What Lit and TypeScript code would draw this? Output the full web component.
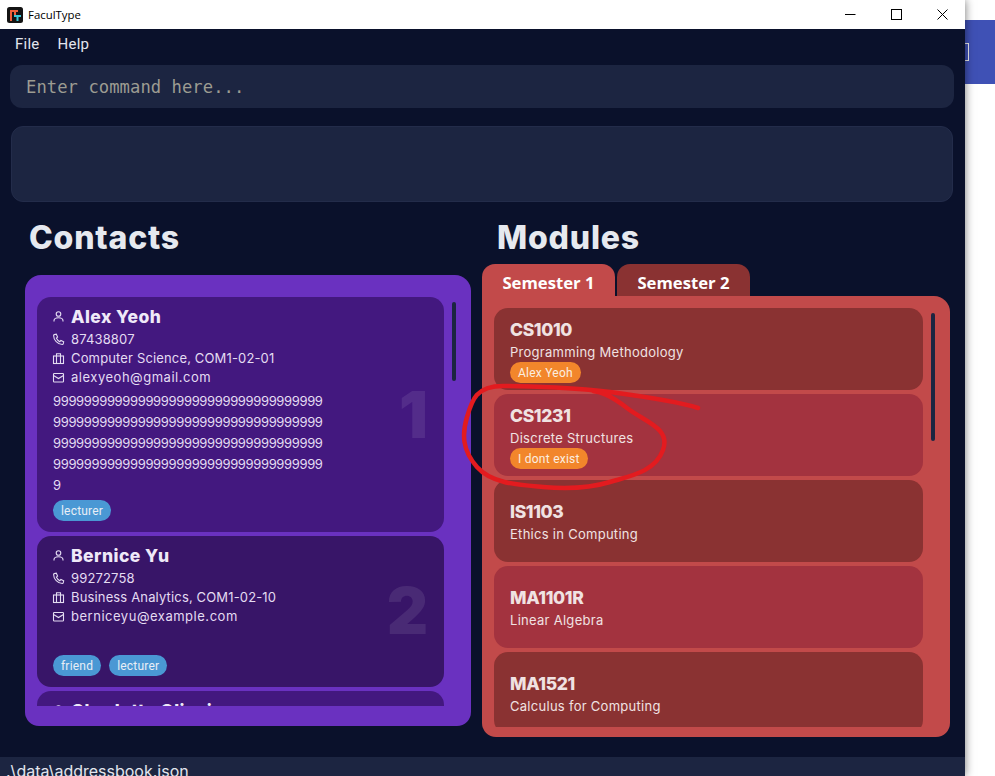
import { LitElement, html, css, svg } from "lit";
import { customElement } from "lit/decorators.js";

const NINES = "9".repeat(141);

interface Person { name: string; phone: string; dept: string; email: string; desc: string; tags: string[]; index: number; }
interface Mod { code: string; title: string; tag?: string; }

const PEOPLE: Person[] = [
  { name: "Alex Yeoh", phone: "87438807", dept: "Computer Science, COM1-02-01", email: "alexyeoh@gmail.com", desc: NINES, tags: ["lecturer"], index: 1 },
  { name: "Bernice Yu", phone: "99272758", dept: "Business Analytics, COM1-02-10", email: "berniceyu@example.com", desc: "", tags: ["friend", "lecturer"], index: 2 },
  { name: "Charlotte Oliveiro", phone: "93210283", dept: "Mathematics, COM1-02-03", email: "charlotte@example.com", desc: "", tags: ["lecturer"], index: 3 },
];

const MODS: Mod[] = [
  { code: "CS1010", title: "Programming Methodology", tag: "Alex Yeoh" },
  { code: "CS1231", title: "Discrete Structures", tag: "I dont exist" },
  { code: "IS1103", title: "Ethics in Computing" },
  { code: "MA1101R", title: "Linear Algebra" },
  { code: "MA1521", title: "Calculus for Computing" },
];

const iconPerson = svg`<circle cx="6.5" cy="4" r="2.3"/><path d="M2 11.5v-.8c0-1.8 1.6-3 4.500-3s4.500 1.200 4.500 3v.8"/>`;
const iconPhone = svg`<path d="M2.200 1.600 4.300 1.200l1.300 2.900-1.300 1c.7 1.500 1.900 2.800 3.500 3.600l1.100-1.300 2.800 1.400-.5 2.100c-.1.400-.4.600-.8.600C5.600 11.300 1.600 7 1.600 2.400c0-.4.2-.7.6-.8Z"/>`;
const iconCase = svg`<rect x="1.500" y="4" width="10" height="7.500"/><path d="M4.500 4V1.800h4V4M4.500 4v7.500M8.500 4v7.500"/>`;
const iconMail = svg`<rect x="1.500" y="2.500" width="10" height="8.500" rx=".8"/><path d="M1.500 4.500 6.500 7.500l5-3"/>`;

@customElement("app-root")
export class AppRoot extends LitElement {
  static styles = css`
    :host { display: block; width: 995px; height: 776px; overflow: hidden; position: relative; background: #fff; font-family: Inter, "Open Sans", sans-serif; }
    .screen { display: flex; height: 776px; }
    .window { width: 965px; flex: none; display: flex; flex-direction: column; background: #0a112b; position: relative; z-index: 1; box-shadow: 0 0 9px rgba(0,0,0,.55); }
    .aside { flex: 1; padding-top: 20px; }
    .blue { height: 64px; background: #3f51b5; display: flex; align-items: center; }
    .bracket { width: 3px; height: 16px; border: 1px solid #eee; border-left: none; }
    .titlebar { height: 29px; flex: none; background: #fff; display: flex; align-items: center; padding-left: 7px; box-sizing: border-box; }
    .appicon { width: 16px; height: 16px; display: block; margin-right: 5px; }
    .apptitle { font: 11.400px "Open Sans", sans-serif; color: #000; flex: 1; }
    .winbtn { width: 46px; height: 29px; display: flex; align-items: center; justify-content: center; }
    .winbtn svg { display: block; }
    .menubar { height: 30px; flex: none; display: flex; align-items: center; gap: 18px; padding-left: 15px; box-sizing: border-box; color: #e3e6ee; font: 15px Roboto, sans-serif; letter-spacing: .25px; }
    .command { height: 43px; flex: none; margin: 6px 11px 0 10px; border-radius: 12px; background: #1c2541; display: flex; align-items: center; padding-left: 16px; font: 17.200px "DejaVu Sans Mono", monospace; color: #9c9c92; letter-spacing: .05px; }
    .result { height: 76px; flex: none; margin: 18px 12px 0 11px; border-radius: 12px; background: #1c2541; box-sizing: border-box; border: 1px solid #232c4a; }
    .panes { flex: 1; min-height: 0; display: flex; }
    .col-contacts { width: 446px; margin-left: 25px; display: flex; flex-direction: column; }
    .col-modules { width: 468px; margin-left: 11px; display: flex; flex-direction: column; }
    h1 { margin: 0; font: 800 32px/1 Inter, sans-serif; color: #e6e9ef; letter-spacing: .8px; }
    .head-c { height: 73px; box-sizing: border-box; padding: 20px 0 0 4px; }
    .head-m { height: 62px; box-sizing: border-box; padding: 20px 0 0 15px; }
    .panel-c { height: 451px; background: #6a31c0; border-radius: 16px 16px 14px 14px; box-sizing: border-box; padding: 22px 0 20px 12px; position: relative; }
    .list { height: 100%; overflow: hidden; display: flex; flex-direction: column; gap: 4px; }
    .thumb { position: absolute; width: 4px; border-radius: 2px; background: #1c2541; }
    .thumb-c { left: 427px; top: 27px; height: 79px; }
    .thumb-m { left: 449px; top: 17px; height: 128px; }
    .card { width: 407px; flex: none; box-sizing: border-box; border-radius: 14px; padding: 8px 16px 11px; position: relative; color: #e4dcf2; background: #43187f; }
    .card.alt { background: #381568; }
    .name { display: flex; align-items: center; height: 23px; font: 800 17.500px/23px Inter, sans-serif; color: #efe9f8; margin-bottom: 2px; letter-spacing: .45px; }
    .row { display: flex; align-items: center; height: 19px; font: 400 13px/19px Inter, sans-serif; letter-spacing: .15px; white-space: nowrap; }
    .row.email { letter-spacing: .52px; }
    .ico { width: 13px; height: 13px; flex: none; margin: 0 6px 0 -1px; fill: none; stroke: #e4dcf2; stroke-width: 1.100; }
    .desc { margin-top: 4px; min-height: 21px; width: 272px; font: 400 13px/21px Inter, sans-serif; word-break: break-all; letter-spacing: -.36px; }
    .tags { display: flex; gap: 8px; margin-top: 4px; }
    .tag { height: 21px; box-sizing: border-box; padding: 0 8px; border-radius: 10.500px; background: #4a98d4; color: #e8eef6; font: 12px/22px Roboto, sans-serif; letter-spacing: .2px; }
    .num { position: absolute; right: 16px; font: 900 64px/1 Inter, sans-serif; color: rgba(255,255,255,.09); }
    .tabs { display: flex; gap: 2px; height: 32px; flex: none; }
    .tab { width: 133px; text-align: center; border-radius: 13px 13px 0 0; background: #8a3232; color: #fff; font: 700 16.700px/38px "Open Sans", sans-serif; }
    .tab.on { background: #c24a4a; }
    .panel-m { height: 441px; background: #c24a4a; border-radius: 0 16px 14px 14px; box-sizing: border-box; padding: 12px 0 10px 12px; position: relative; }
    .mod { width: 429px; height: 82px; flex: none; box-sizing: border-box; border-radius: 14px; padding: 2px 16px 0; background: #8a3232; color: #f0e2e2; display: flex; flex-direction: column; justify-content: center; align-items: flex-start; }
    .mod.alt { background: #a3333f; }
    .code { font: 800 17.500px/24px Inter, sans-serif; letter-spacing: -.35px; }
    .title { font: 400 13px/20px Inter, sans-serif; letter-spacing: .28px; }
    .mtag { height: 21px; flex: none; margin-bottom: -1px; box-sizing: border-box; padding: 0 8px; border-radius: 10.500px; background: #f2862b; color: #fbeee0; font: 12px/22px Roboto, sans-serif; letter-spacing: .25px; }
    .status { height: 19px; flex: none; background: #1c2541; color: #e3e6ee; padding-left: 6px; font: 16px/28px Inter, sans-serif; overflow: hidden; }
    .ink { position: absolute; left: 0; top: 0; z-index: 2; pointer-events: none; }
  `;

  private icon(c: unknown) {
    return html`<svg class="ico" viewBox="0 0 13 13">${c}</svg>`;
  }

  render() {
    return html`
      <div class="screen">
        <div class="window">
          <div class="titlebar">
            <svg class="appicon" viewBox="0 0 16 16">
              <rect width="16" height="16" rx="2.500" fill="#141414"/>
              <path d="M3 14V3h8v2H9v3H7V5H5v9Z" fill="#f0603a"/>
              <path d="M7 8h7v2h-2.500v4h-2v-4H7Z" fill="#38c8d8"/>
            </svg>
            <span class="apptitle">FaculType</span>
            <div class="winbtn"><svg width="11" height="11"><path d="M0 5.500h10.500" stroke="#000"/></svg></div>
            <div class="winbtn"><svg width="11" height="11"><rect x=".5" y=".5" width="10" height="10" fill="none" stroke="#000"/></svg></div>
            <div class="winbtn"><svg width="11" height="11"><path d="M.5.5l10 10M10.500.5l-10 10" stroke="#000" fill="none"/></svg></div>
          </div>
          <div class="menubar"><span>File</span><span>Help</span></div>
          <div class="command">Enter command here...</div>
          <div class="result"></div>
          <div class="panes">
            <div class="col-contacts">
              <div class="head-c"><h1>Contacts</h1></div>
              <div class="panel-c">
                <div class="list">
                  ${PEOPLE.map((p, i) => html`
                    <div class="card ${i % 2 ? "alt" : ""}">
                      <div class="name">${this.icon(iconPerson)}${p.name}</div>
                      <div class="row">${this.icon(iconPhone)}${p.phone}</div>
                      <div class="row">${this.icon(iconCase)}${p.dept}</div>
                      <div class="row email">${this.icon(iconMail)}${p.email}</div>
                      <div class="desc">${p.desc}</div>
                      <div class="tags">${p.tags.map((t) => html`<span class="tag">${t}</span>`)}</div>
                      <div class="num" style="top:${i === 0 ? 86 : 43}px">${p.index}</div>
                    </div>`)}
                </div>
                <div class="thumb thumb-c"></div>
              </div>
            </div>
            <div class="col-modules">
              <div class="head-m"><h1>Modules</h1></div>
              <div class="tabs"><div class="tab on">Semester 1</div><div class="tab">Semester 2</div></div>
              <div class="panel-m">
                <div class="list">
                  ${MODS.map((m, i) => html`
                    <div class="mod ${i % 2 ? "alt" : ""}">
                      <div class="code">${m.code}</div>
                      <div class="title">${m.title}</div>
                      ${m.tag ? html`<span class="mtag">${m.tag}</span>` : ""}
                    </div>`)}
                </div>
                <div class="thumb thumb-m"></div>
              </div>
            </div>
          </div>
          <div class="status">.\\data\\addressbook.json</div>
        </div>
        <div class="aside"><div class="blue"><span class="bracket"></span></div></div>
      </div>
      <svg class="ink" width="995" height="776" viewBox="0 0 995 776">
        <path d="M698 408C680 402 640 396 610 392S530 386 503 386S472 400 467 417S462 450 477 467S520 485 543 487S590 488 610 482S655 472 663 450S645 422 627 408S600 392 593 391" fill="none" stroke="#e31b1f" stroke-width="4.500" stroke-linecap="round" stroke-linejoin="round"/>
      </svg>
    `;
  }
}
